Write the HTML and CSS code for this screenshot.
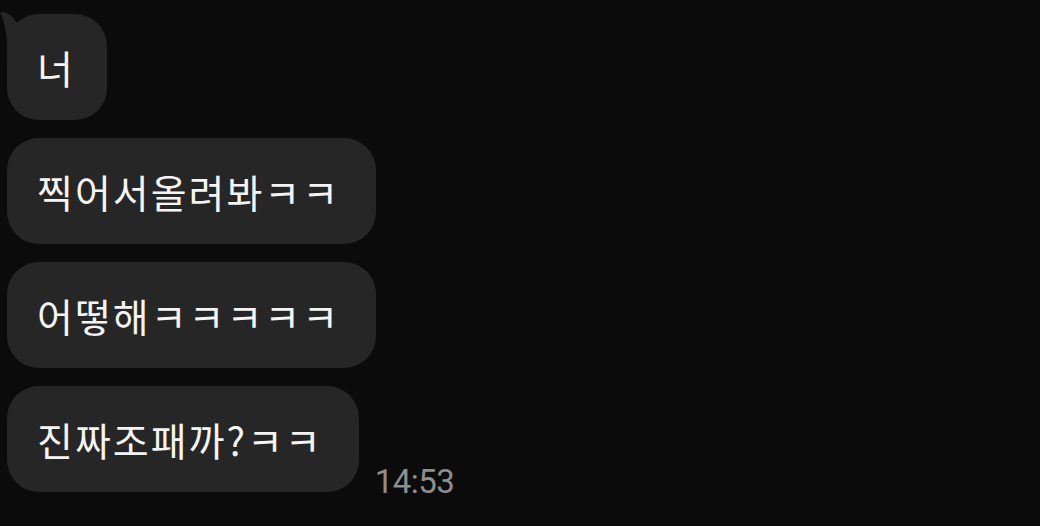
FILE: index.html
```html
<!DOCTYPE html>
<html lang="ko">
<head>
<meta charset="utf-8">
<link rel="stylesheet" href="styles.css">
</head>
<body>
<div class="chat">
  <div class="row">
    <div class="bubble first">
      <svg class="tail" width="30" height="50" viewBox="0 0 30 50"><path d="M0 0 C7 -1 14 5 19 14 L26 30 L26 50 L8 50 C8 28 5 10 0 0 Z" fill="#262626"/></svg>
      <span class="text">너</span>
    </div>
  </div>
  <div class="row">
    <div class="bubble"><span class="text">찍어서올려봐ㅋㅋ</span></div>
  </div>
  <div class="row">
    <div class="bubble"><span class="text">어떻해ㅋㅋㅋㅋㅋ</span></div>
  </div>
  <div class="row">
    <div class="bubble"><span class="text">진짜조패까?ㅋㅋ</span></div>
    <span class="time">14:53</span>
  </div>
</div>
</body>
</html>
```

FILE: styles.css
```css
html, body {
  margin: 0;
  padding: 0;
  background: #0b0b0b;
  width: 1040px;
  height: 526px;
  overflow: hidden;
}

.chat {
  display: flex;
  flex-direction: column;
  gap: 18px;
  padding: 14px 0 0 7px;
}

.row {
  display: flex;
  align-items: flex-end;
  gap: 16px;
}

.bubble {
  position: relative;
  display: flex;
  align-items: center;
  height: 106px;
  padding: 0 36px 0 30px;
  background: #262626;
  border-radius: 32px;
  box-sizing: border-box;
}

.bubble.first {
  padding-right: 32px;
}

.tail {
  position: absolute;
  left: -7px;
  top: -2px;
}

.text {
  position: relative;
  font-family: "Noto Sans CJK KR", "Noto Sans", sans-serif;
  font-size: 39px;
  line-height: 1;
  letter-spacing: 2px;
  color: #f4f4f4;
  white-space: nowrap;
}

.time {
  font-family: Roboto, "Liberation Sans", sans-serif;
  font-size: 33px;
  letter-spacing: -0.5px;
  line-height: 1;
  color: #8e8e8e;
  margin-bottom: -6px;
}
```
